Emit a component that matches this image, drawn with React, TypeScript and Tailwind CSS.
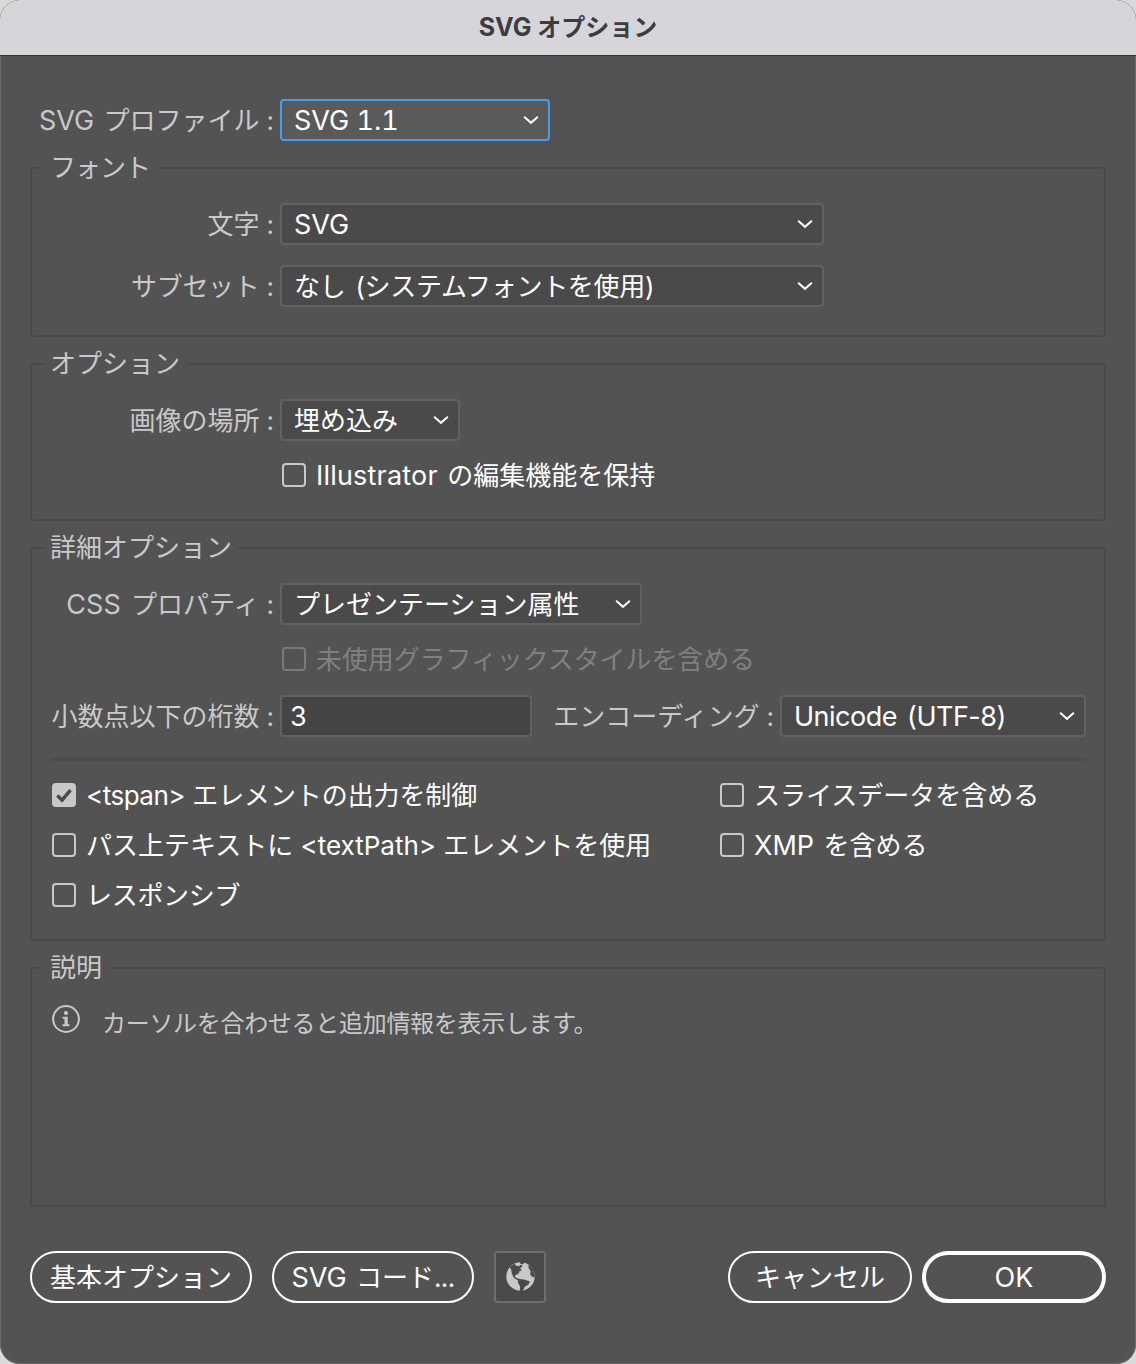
import type { ReactNode } from "react";

function Chevron() {
  return (
    <svg width="16" height="10" viewBox="0 0 16 10" className="shrink-0" fill="none">
      <path d="M1.7 2.2 8 7.8 14.3 2.2" stroke="#fff" strokeWidth="2" strokeLinecap="round" />
    </svg>
  );
}

function Select({ className, children, focused }: { className: string; children: ReactNode; focused?: boolean }) {
  return (
    <button
      type="button"
      className={`flex h-[42px] shrink-0 items-center justify-between rounded-[4px] border-2 pr-[9px] pl-3 text-left text-white ${
        focused ? "border-[#4a9cf5] bg-[#5a5a5a]" : "border-[#616161] bg-[#4a4a4a]"
      } ${className}`}
    >
      <span className="pt-px">{children}</span>
      <Chevron />
    </button>
  );
}

function Label({ children }: { children: ReactNode }) {
  return (
    <span className="flex w-[248px] shrink-0 justify-end pt-px text-[#c9c9c9]">
      <span>{children}</span>
      <span className="mr-[6px] ml-[7px]">:</span>
    </span>
  );
}

function Checkbox({ checked, disabled, children }: { checked?: boolean; disabled?: boolean; children: ReactNode }) {
  return (
    <label className={`flex h-6 items-center gap-[10px] ${disabled ? "text-[#808080]" : "text-white"}`}>
      {checked ? (
        <span className="flex size-6 items-center justify-center rounded-[4px] bg-[#c8c8c8]">
          <svg width="24" height="24" viewBox="0 0 24 24" fill="none">
            <path d="M5.3 12.5 10 17.2 18.5 7.2" stroke="#4b4b4b" strokeWidth="3.4" />
          </svg>
        </span>
      ) : (
        <span className={`size-6 rounded-[4px] border-2 ${disabled ? "border-[#7a7a7a]" : "border-[#c8c8c8]"}`} />
      )}
      <span className="pt-[2px]">{children}</span>
    </label>
  );
}

function Group({ title, className, children }: { title: ReactNode; className: string; children: ReactNode }) {
  return (
    <fieldset className={`mx-[30px] rounded-[3px] border-2 border-[#4a4a4a] ${className}`}>
      <legend className="ml-3 h-[26px] px-[6px] leading-[26px] text-[#c9c9c9]">{title}</legend>
      {children}
    </fieldset>
  );
}

function PillButton({ className, children }: { className: string; children: ReactNode }) {
  return (
    <button
      type="button"
      className={`flex h-[52px] shrink-0 items-center justify-center rounded-full border-white text-white ${className}`}
    >
      <span className="pt-px">{children}</span>
    </button>
  );
}

function GlobeIcon() {
  return (
    <svg width="29" height="29" viewBox="0 0 29 30" preserveAspectRatio="none" className="mb-px">
      <ellipse cx="14.5" cy="15" rx="14.2" ry="14.7" fill="#c8c8c8" />
      <g fill="#4a4a4a">
        <path d="M3.5 5.5 8.5 1.5 10 3.8 13.5 4.4 14 3 16.5 2.8 15.8 5.2 14 6.8 16 8.5 13.5 9.5 12.6 12 9.6 13.5 9 15.5 11 16.8 13.8 17.6 18 18.2 24 20.3 22.2 23.5 18.8 25.5 16.8 30H13.8L14 25 12 21.5 11.8 18.8 8 16.6 5.8 12 5.4 8Z" />
        <path d="M14 0h4.5L17.3 2H14.5ZM22.5 2.5 27 7.5 29 14.5 27.3 16 24.3 13.4 24.6 9 22.6 6.5Z" />
      </g>
    </svg>
  );
}

export default function App() {
  return (
    <div className="h-[1364px] w-[1136px] bg-[#d9d9d9]">
      <div className="flex h-full flex-col overflow-hidden rounded-[20px] bg-[#535353] font-['Inter','Noto_Sans_CJK_JP',sans-serif] text-[26px] leading-[26px] whitespace-nowrap shadow-[inset_0_0_0_1px_#6a6a6a]">
        <header className="flex h-14 shrink-0 items-center justify-center border-b border-[#343436] bg-[#d6d5da] pb-px text-[24px] font-bold text-[#3d3c40]">
          <span>
            <span className="text-[25px]">SVG</span> オプション
          </span>
        </header>

        <div className="mt-[43px] flex items-center pl-8">
          <Label>
            <span className="mr-[2px] text-[27px]">SVG</span> プロファイル
          </Label>
          <Select className="w-[270px]" focused>
            <span className="text-[27px] tabular-nums">SVG 1.1</span>
          </Select>
        </div>

        <Group title={<span className="mr-1 tracking-[-1px]">フォント</span>} className="mt-[14px] h-[182px]">
          <div className="mt-[22px] flex items-center">
            <Label>文字</Label>
            <Select className="w-[544px]">
              <span className="text-[27px]">SVG</span>
            </Select>
          </div>
          <div className="mt-5 flex items-center">
            <Label>
              <span className="tracking-[-0.3px]">サブセット</span>
            </Label>
            <Select className="w-[544px]">
              <span className="tracking-[-0.3px] [word-spacing:3px]">なし (システムフォントを使用)</span>
            </Select>
          </div>
        </Group>

        <Group title="オプション" className="mt-[14px] h-[170px]">
          <div className="mt-[22px] flex items-center">
            <Label>画像の場所</Label>
            <Select className="w-[180px]">埋め込み</Select>
          </div>
          <div className="mt-[22px] pl-[250px]">
            <Checkbox>
              <span className="mr-[2px] text-[27px] tracking-[0.2px]">Illustrator</span> の編集機能を保持
            </Checkbox>
          </div>
        </Group>

        <Group title="詳細オプション" className="mt-[14px] h-[406px]">
          <div className="mt-[22px] flex items-center">
            <Label>
              <span className="mr-[3px] text-[27px]">CSS</span> プロパティ
            </Label>
            <Select className="w-[362px]">プレゼンテーション属性</Select>
          </div>
          <div className="mt-[22px] pl-[250px]">
            <Checkbox disabled>
              <span className="tracking-[-0.1px]">未使用グラフィックスタイルを含める</span>
            </Checkbox>
          </div>
          <div className="mt-6 flex items-center">
            <Label>小数点以下の桁数</Label>
            <input
              className="h-[42px] w-[252px] rounded-[4px] border-2 border-[#616161] bg-[#454545] px-2 text-[27px] text-white"
              defaultValue="3"
            />
            <Label>エンコーディング</Label>
            <Select className="w-[306px]">
              <span className="text-[27px] tracking-[-0.5px] [word-spacing:3px]">Unicode (UTF-8)</span>
            </Select>
          </div>
          <div className="mt-[21px] mr-[18px] ml-[19px] h-[3px] bg-[#4c4c4c]" />
          <div className="mt-[22px] grid grid-cols-[668px_1fr] gap-y-[26px] pl-5">
            <Checkbox checked>
              <span className="tracking-[-0.5px]">&lt;tspan&gt;</span>
              <span className="tracking-[-0.1px]"> エレメントの出力を制御</span>
            </Checkbox>
            <Checkbox>スライスデータを含める</Checkbox>
            <Checkbox>パス上テキストに &lt;textPath&gt; エレメントを使用</Checkbox>
            <Checkbox>
              <span className="mr-[2px] text-[27px]">XMP</span> を含める
            </Checkbox>
            <Checkbox>
              <span className="tracking-[-0.3px]">レスポンシブ</span>
            </Checkbox>
          </div>
        </Group>

        <Group title="説明" className="mt-[14px] h-[252px]">
          <div className="mt-6 flex items-start pl-5 text-[24px] text-[#c9c9c9]">
            <svg width="28" height="28" viewBox="0 0 28 28" fill="none">
              <circle cx="14" cy="14" r="12.9" stroke="#c8c8c8" strokeWidth="2" />
              <circle cx="14" cy="8" r="2.1" fill="#c8c8c8" />
              <path d="M10.5 11.8h5.2v7.4h1.8v2h-7v-2h2v-5.4h-2z" fill="#c8c8c8" />
            </svg>
            <span className="mt-[6px] ml-[22px] tracking-[-0.3px]">カーソルを合わせると追加情報を表示します。</span>
          </div>
        </Group>

        <footer className="mt-11 flex items-center px-[30px]">
          <PillButton className="w-[222px] border-2">基本オプション</PillButton>
          <PillButton className="ml-5 w-[202px] border-2">
            <span className="mr-[2px] text-[27px]">SVG</span> コード<span className="tracking-[-0.6px]">...</span>
          </PillButton>
          <button
            type="button"
            className="ml-5 flex size-[52px] items-center justify-center rounded-[4px] border-2 border-[#6e6e6e] bg-[#4a4a4a]"
          >
            <GlobeIcon />
          </button>
          <PillButton className="ml-auto w-[184px] border-2">キャンセル</PillButton>
          <PillButton className="ml-[10px] w-[184px] border-4">
            <span className="text-[27px]">OK</span>
          </PillButton>
        </footer>
      </div>
    </div>
  );
}
